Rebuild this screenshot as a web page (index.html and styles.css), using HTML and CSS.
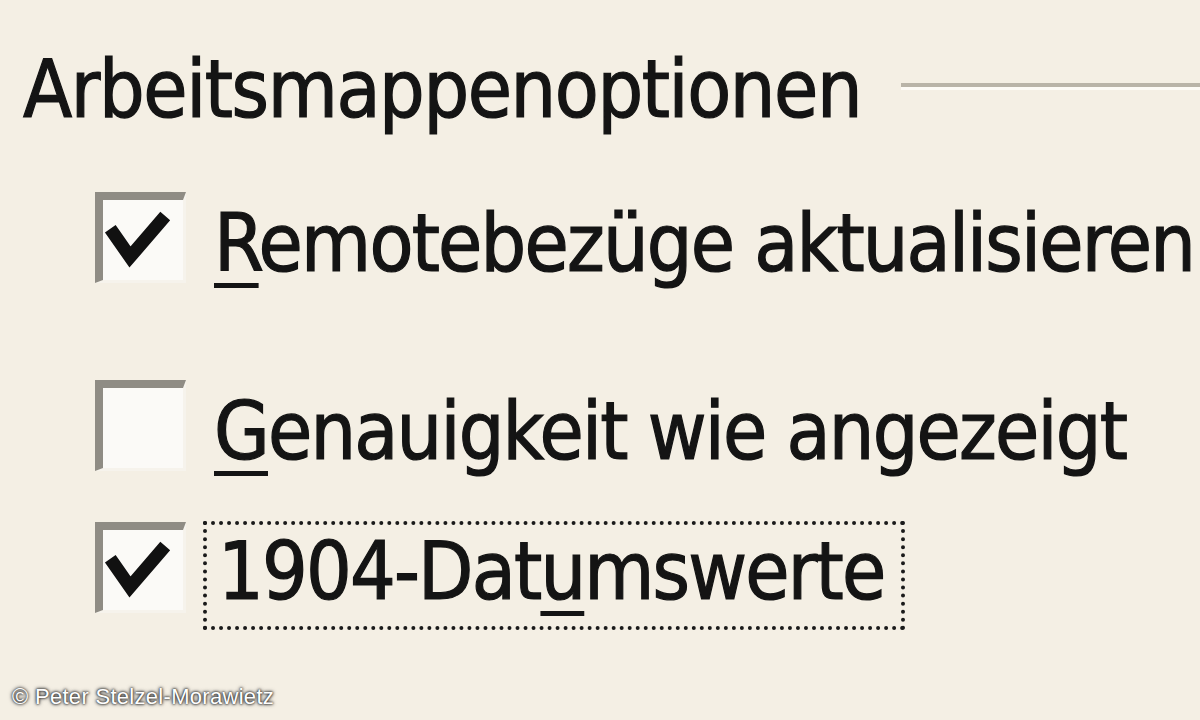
FILE: index.html
```html
<!DOCTYPE html>
<html lang="de">
<head>
<meta charset="utf-8">
<title>Arbeitsmappenoptionen</title>
<link rel="stylesheet" href="styles.css">
</head>
<body>
<div class="page">
  <div class="legend">
    <span class="legend-title">Arbeitsmappenoptionen</span>
    <span class="legend-line"></span>
  </div>
  <div class="option opt1">
    <span class="box">
      <svg class="check" viewBox="0 0 88 88" width="88" height="88"><polyline points="19,42 35,65 66,29" fill="none" stroke="#111" stroke-width="13" stroke-linejoin="miter" stroke-linecap="square"/></svg>
    </span>
    <span class="label"><u>R</u>emotebezüge aktualisieren</span>
  </div>
  <div class="option opt2">
    <span class="box"></span>
    <span class="label"><u>G</u>enauigkeit wie angezeigt</span>
  </div>
  <div class="option opt3">
    <span class="box">
      <svg class="check" viewBox="0 0 88 88" width="88" height="88"><polyline points="19,42 35,65 66,29" fill="none" stroke="#111" stroke-width="13" stroke-linejoin="miter" stroke-linecap="square"/></svg>
    </span>
    <span class="label focus">1904-Dat<u>u</u>mswerte</span>
  </div>
  <div class="credit">© Peter Stelzel-Morawietz</div>
</div>
</body>
</html>
```
FILE: styles.css
```css
html, body {
  margin: 0;
  padding: 0;
}
body {
  background: #f4efe4;
  font-family: "DejaVu Sans", "Liberation Sans", sans-serif;
  color: #141414;
}
.page {
  position: relative;
  width: 1200px;
  height: 720px;
  overflow: hidden;
}
.legend {
  display: flex;
  align-items: flex-start;
  margin-top: 50px;
  padding-left: 23px;
}
.legend-title {
  font-size: 80px;
  line-height: 80px;
  white-space: nowrap;
  font-stretch: condensed;
  letter-spacing: -1.4px;
  -webkit-text-stroke: 1.2px #141414;
}
.legend-line {
  flex: 1;
  height: 4px;
  margin-top: 33px;
  margin-left: 40px;
  background: #b9b4a8;
  border-bottom: 3px solid #fdfbf6;
}
.option {
  display: flex;
  align-items: flex-start;
  padding-left: 95px;
  white-space: nowrap;
}
.opt1 { margin-top: 62px; }
.opt2 { margin-top: 96px; }
.opt3 { margin-top: 49px; }
.opt3 .box { margin-top: 1px; }
.box {
  flex: none;
  width: 80px;
  height: 80px;
  border-top: 8px solid #8f8c84;
  border-left: 8px solid #8f8c84;
  border-right: 3px solid #f6f3ec;
  border-bottom: 3px solid #f6f3ec;
  background: #fbfaf7;
  position: relative;
}
.check {
  position: absolute;
  left: -8px;
  top: -8px;
}
.label {
  font-size: 80px;
  line-height: 80px;
  font-stretch: condensed;
  letter-spacing: -1.8px;
  -webkit-text-stroke: 1.2px #141414;
  margin-top: 12px;
  margin-left: 28px;
}
.label u {
  text-decoration-thickness: 5px;
  text-underline-offset: 12px;
}
.focus {
  margin-top: 0;
  margin-left: 17px;
  padding: 7px 16px 14px 11px;
  border: 4px dotted #1a1a1a;
}
.credit {
  position: absolute;
  left: 12px;
  top: 684px;
  font-family: "Liberation Sans", Arial, sans-serif;
  font-size: 22px;
  color: #ffffff;
  text-shadow: 0 0 3px #333, 0 0 2px #333, 0 0 4px #555;
  letter-spacing: 0.3px;
}
```
